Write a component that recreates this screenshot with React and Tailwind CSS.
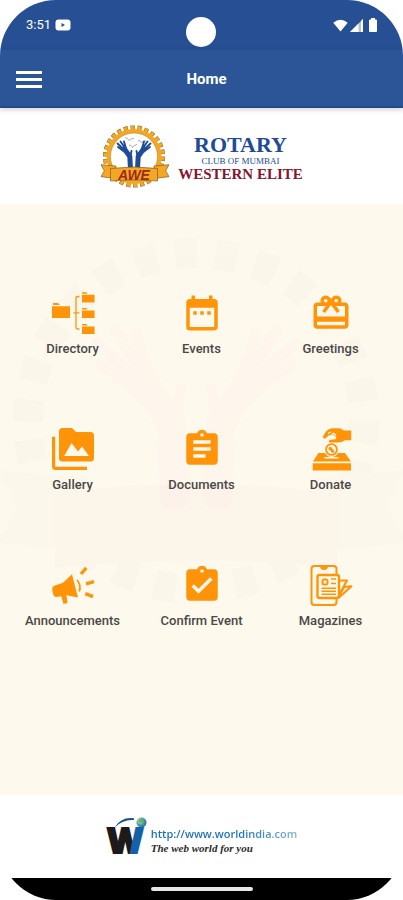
import React from "react";
import {
  MdDateRange,
  MdRedeem,
  MdAssignment,
  MdAssignmentTurnedIn,
} from "react-icons/md";

const CREAM = "#fef9ed";

function DirectoryIcon() {
  return (
    <svg viewBox="0 0 42 42" className="size-[42px] overflow-visible" fill="currentColor" aria-hidden="true">
      <path d="M1 11h5l2 2H1zM0 14.2h18V26H0z" />
      <path d="M30 .3h4.500l1 1.500H30zM30 2.800h12.600V10.400H30z" />
      <path d="M30 16h4.500l1 1.500H30zM30 18.500h12.600V26H30z" />
      <path d="M30 32h4.500l1 1.500H30zM30 34.500h12.600V42H30z" />
      <path
        d="M27.500 4.500h-2q-1.500 0-1.500 1.500v29.500q0 1.500 1.500 1.500h2M21.500 20.800h6"
        fill="none"
        stroke="currentColor"
        strokeWidth="1.300"
      />
    </svg>
  );
}

function GalleryIcon() {
  return (
    <svg viewBox="0 0 42 42" className="size-[42px] overflow-visible" fill="currentColor" aria-hidden="true">
      <path d="M10.500 0h9.500l4 4h14.500Q42 4 42 7.500v22.500q0 3.500-3.500 3.500h-28Q7 33.500 7 30V3.500Q7 0 10.500 0z" />
      <path d="M12.200 28 19.500 15l6.500 8.500 4-5L37 28z" fill={CREAM} />
      <path d="M0 8.700h3.200v30.100H35V42H3.500Q0 42 0 38.500z" />
    </svg>
  );
}

function DonateIcon() {
  return (
    <svg viewBox="0 0 42 42" className="size-[42px] overflow-visible" fill="currentColor" aria-hidden="true">
      <path d="M2.700 35.200h38.300V42.500H2.700zM8.500 25h26.500l6 8.600H2.900z" />
      <circle cx="21.500" cy="21.500" r="7.400" fill={CREAM} />
      <circle cx="21.500" cy="21.500" r="5.400" fill="none" stroke="currentColor" strokeWidth="1.800" />
      <path d="M18.300 20.500c1-2.500 3-2 3.500-.5s2.500 1.500 2.500 3.500-3 1.500-3.300 0-2.400-1-2.700-3z" />
      <path d="M14.500 29.800h14" stroke={CREAM} strokeWidth="1.500" />
      <path d="M16 3.500Q19 .2 22.500.2h7.500L34 2.400h7.200v9.800h-6.200q-3.500 2.300-7 2.300h-8.500q-1.500-2.300 1-2.700l5-.6 1-1.700-2.500-2.500-5 .3-3.500 2.900q-2.600.8-2.600-1.800z" />
      <path d="M18 5.500l3-1.500M21.500 6.800l2-1.500 2.500 2" fill="none" stroke={CREAM} strokeWidth="1.100" />
    </svg>
  );
}

function AnnouncementIcon() {
  return (
    <svg viewBox="0 0 42 42" className="size-[42px] overflow-visible" fill="currentColor" aria-hidden="true">
      <path d="M20 10.300 26 33.500l-11.500-2.300 1 7.800-4 1-2.300-7.800-5 .8Q1.800 33 1 29.500L.2 25.800Q0 22.500 3 21.600l8-2.800z" />
      <path d="M25 16q4.500 5 2.200 11.500" fill="none" stroke="currentColor" strokeWidth="1.800" />
      <path d="M29 10 34.300 3.800M34 19.800l8-2.100M33.300 29.700l7.700 3" stroke="currentColor" strokeWidth="3.400" />
    </svg>
  );
}

function MagazineIcon() {
  return (
    <svg
      viewBox="0 0 42 42"
      className="size-[42px] overflow-visible"
      fill="none"
      stroke="currentColor"
      strokeWidth="2"
      strokeLinejoin="round"
      aria-hidden="true"
    >
      <rect x="1.500" y="2" width="25" height="39" rx="3" />
      <path d="M11 2.500q.5 2.500 3 2.500t3-2.500z" fill="currentColor" />
      <path d="M29 16.500h8L29 31M33.500 23l8-.8L29 33.500" />
      <path d="M35 22.500 30 31" strokeWidth="1.400" />
      <rect x="7.500" y="11" width="21.500" height="23" rx="2" fill={CREAM} strokeWidth="2.400" />
      <rect x="12.500" y="15.500" width="5" height="5" rx="1.500" />
      <path d="M21 15h5M21 19.500h5M11.500 24.200h14.500M11.500 27.200h14.500M11.500 30.200h14.500" strokeWidth="1.400" />
    </svg>
  );
}

function Hands({ color }) {
  return (
    <g fill="none" stroke={color} strokeLinecap="round">
      <path d="M30.500 44 29.800 31.500 24.500 24M37.500 44l.7-12.500L43.500 24" strokeWidth="5" />
      <path
        d="M24 24.500 17.500 18.500M25 23l-4.500-6.500M26 23.500l-2-7M24 26.500l-6-4.500M30.500 31l1-5M44 24.500l6.500-6M43 23l4.500-6.500M42 23.500l2-7M44 26.500l6-4.500M37.500 31l-1-5"
        strokeWidth="1.900"
      />
    </g>
  );
}

const RIBBON_TAILS = "M1 39.700l15 1.300v12.500L1 51.700l3.300-6zM69 39.700 54 41v12.500l15-1.800-3.300-6z";
const RIBBON_BAND = "M10.500 43.500q23.500-3 47 0v12.500q-23.500-2.500-47 0z";

function ClubEmblem() {
  return (
    <svg viewBox="0 0 70 63" className="h-[63px] w-[70px]" aria-hidden="true">
      <circle cx="34" cy="31.500" r="28.600" pathLength="104" fill="none" stroke="#8f7434" strokeWidth="5" strokeDasharray="2.500 1.500" />
      <circle cx="34" cy="31.500" r="28.300" pathLength="104" fill="none" stroke="#f5a623" strokeWidth="4.600" strokeDasharray="1.900 2.100" strokeDashoffset="-.3" />
      <circle cx="34" cy="31.500" r="25.500" fill="#fff" stroke="#f5a623" strokeWidth="4" />
      <circle cx="34" cy="31.500" r="23.500" fill="none" stroke="#9a7a35" strokeWidth=".5" />
      <path
        d="M25 12.500q3 .5 4 3 2.500-2.500 5-2M38 15.500q3 0 3.500 2 2.500-2 4.500-1.500M29 20q2.500 0 3.500 2.500Q34 20 37 19.500"
        fill="none"
        stroke="#8d95a5"
        strokeWidth=".8"
      />
      <Hands color="#1f4c96" />
      <g fill="#f5a623" stroke="#80602a" strokeWidth=".7" strokeLinejoin="round">
        <path d={RIBBON_TAILS} />
        <path d={RIBBON_BAND} />
      </g>
      <text
        x="34"
        y="54.500"
        textAnchor="middle"
        fontFamily="Liberation Sans, sans-serif"
        fontStyle="italic"
        fontWeight="700"
        fontSize="14"
        fill="#9c2a1c"
      >
        AWE
      </text>
    </svg>
  );
}

function Watermark() {
  return (
    <svg viewBox="0 0 70 63" className="h-[378px] w-[420px] shrink-0" aria-hidden="true">
      <g opacity=".01">
        <circle cx="34" cy="31.500" r="28" pathLength="104" fill="none" stroke="#6b5a48" strokeWidth="5" strokeDasharray="2.200 1.800" />
        <path d={RIBBON_TAILS} fill="#b08a70" />
        <path d={RIBBON_BAND} fill="#b06a60" />
      </g>
      <g opacity=".012">
        <Hands color="#ff30d0" />
      </g>
    </svg>
  );
}

const tiles = [
  { label: "Directory", icon: <DirectoryIcon /> },
  { label: "Events", icon: <MdDateRange size={42} aria-hidden="true" /> },
  { label: "Greetings", icon: <MdRedeem size={42} aria-hidden="true" /> },
  { label: "Gallery", icon: <GalleryIcon /> },
  { label: "Documents", icon: <MdAssignment size={42} aria-hidden="true" /> },
  { label: "Donate", icon: <DonateIcon /> },
  { label: "Announcements", icon: <AnnouncementIcon /> },
  { label: "Confirm Event", icon: <MdAssignmentTurnedIn size={42} aria-hidden="true" /> },
  { label: "Magazines", icon: <MagazineIcon /> },
];

function StatusBar() {
  return (
    <div className="grid h-[50px] grid-cols-3 items-start bg-[#264f94] text-white">
      <div className="flex items-center gap-1 pt-4 pl-[26px]">
        <span className="text-[13px] leading-[18px]">3:51</span>
        <svg viewBox="0 0 16 12" className="h-3 w-4" aria-hidden="true">
          <rect x=".5" y=".5" width="15" height="11" rx="3" fill="#fff" />
          <path d="M6.500 4v4L10 6z" fill="#264f94" />
        </svg>
      </div>
      <div className="mt-[17px] size-[30px] justify-self-center rounded-full bg-white" />
      <div className="flex items-center justify-end gap-0.5 pt-[18px] pr-[26px]">
        <svg viewBox="0 0 15 13" className="h-[13px] w-[15px]" fill="#fff" aria-hidden="true">
          <path d="M7.500 12.500.3 3.800Q7.500-2.500 14.700 3.800z" />
        </svg>
        <svg viewBox="0 0 13 13" className="h-[13px] w-[13px]" fill="#fff" aria-hidden="true">
          <path d="M0 13 13 0v13z" opacity=".65" />
          <path d="M0 13 8.500 4.500V13zM11 2l2-2v13h-2z" />
        </svg>
        <svg viewBox="0 0 8 14" className="ml-1 h-[14px] w-2" fill="#fff" aria-hidden="true">
          <path d="M2 0h4v1.500H7q1 0 1 1V13q0 1-1 1H1q-1 0-1-1V2.500q0-1 1-1h1z" />
        </svg>
      </div>
    </div>
  );
}

export default function App() {
  return (
    <div className="min-h-screen bg-white font-['Roboto',sans-serif]">
      <div className="flex min-h-screen flex-col overflow-hidden rounded-[56px] bg-white">
        <StatusBar />

        <header className="z-10 grid h-[58px] grid-cols-[1fr_auto_1fr] items-center border-b-2 border-[#1f4a8c] bg-[#2b5597] px-4 pt-0.5 text-white shadow-[0_2px_5px_rgba(60,40,20,0.2)]">
          <button type="button" aria-label="Open menu" className="flex w-[26px] flex-col gap-1">
            <span className="h-[3px] w-full bg-white" />
            <span className="h-[3px] w-full bg-white" />
            <span className="h-[3px] w-full bg-white" />
          </button>
          <h1 className="pl-2.5 text-[15px] leading-5 font-bold">Home</h1>
        </header>

        <div className="flex h-24 items-center justify-center gap-2">
          <ClubEmblem />
          <div className="flex flex-col items-center pt-1 font-['Liberation_Serif',serif] whitespace-nowrap">
            <span className="text-[22px] leading-[22px] font-bold text-[#214b96]">ROTARY</span>
            <span className="text-[9px] leading-[10px] text-[#214b96]">CLUB OF MUMBAI</span>
            <span className="text-[15px] leading-4 font-bold text-[#85152c]">WESTERN ELITE</span>
          </div>
        </div>

        <main className="relative flex-1 overflow-hidden bg-[#fef9ed]">
          <div className="pointer-events-none absolute inset-x-0 top-7 flex justify-center">
            <Watermark />
          </div>
          <nav className="relative grid grid-cols-3 gap-y-[69px] px-2 pt-[88px] pb-10">
            {tiles.map((t) => (
              <button key={t.label} type="button" className="flex flex-col items-center gap-[5px] text-[#ff9409]">
                {t.icon}
                <span className="text-[13px] leading-5 font-medium whitespace-nowrap text-[#4a4846]">{t.label}</span>
              </button>
            ))}
          </nav>
        </main>

        <footer className="flex h-[83px] items-center justify-center">
          <a href="#worldindia" className="flex items-center gap-1">
            <svg viewBox="0 0 41 40" className="h-10 w-[41px] overflow-visible" aria-hidden="true">
              <defs>
                <linearGradient id="w-fill" x1="0" x2="1" y1="0" y2="0.250">
                  <stop offset=".76" stopColor="#1c1a1b" />
                  <stop offset=".79" stopColor="#1560a8" />
                </linearGradient>
                <radialGradient id="globe" cx=".35" cy=".35" r=".75">
                  <stop offset="0" stopColor="#d8efb0" />
                  <stop offset=".5" stopColor="#4f9fae" />
                  <stop offset="1" stopColor="#1d5a9c" />
                </radialGradient>
              </defs>
              <text
                x="1"
                y="36"
                fontFamily="Open Sans, sans-serif"
                fontWeight="800"
                fontSize="35"
                fill="url(#w-fill)"
                stroke="url(#w-fill)"
                strokeWidth="2"
              >
                W
              </text>
              <path d="M8.500 10.500Q15-.5 28 1.200V3Q17 2 8.500 10.500z" fill="#1d4f93" />
              <circle cx="35.500" cy="5.500" r="5" fill="url(#globe)" />
              <path d="M33 3q3-2 4 0t-2 2.500-2-2.500M36 7.500q2-1.500 3 0" fill="#6fae4a" />
            </svg>
            <span className="flex flex-col pt-2 whitespace-nowrap">
              <span className="bg-gradient-to-r from-[#1670b4] from-60% to-[#7fb0d2] bg-clip-text font-['Open_Sans',sans-serif] text-[11px] leading-[14px] font-semibold text-transparent">
                http://www.worldindia.com
              </span>
              <span className="font-['Liberation_Serif',serif] text-[11px] leading-[14px] font-bold text-[#2b2b2b] italic">
                The web world for you
              </span>
            </span>
          </a>
        </footer>

        <div className="flex h-[22px] items-center justify-center bg-black">
          <div className="h-1 w-[102px] rounded-full bg-[#e6e6e6]" />
        </div>
      </div>
    </div>
  );
}
